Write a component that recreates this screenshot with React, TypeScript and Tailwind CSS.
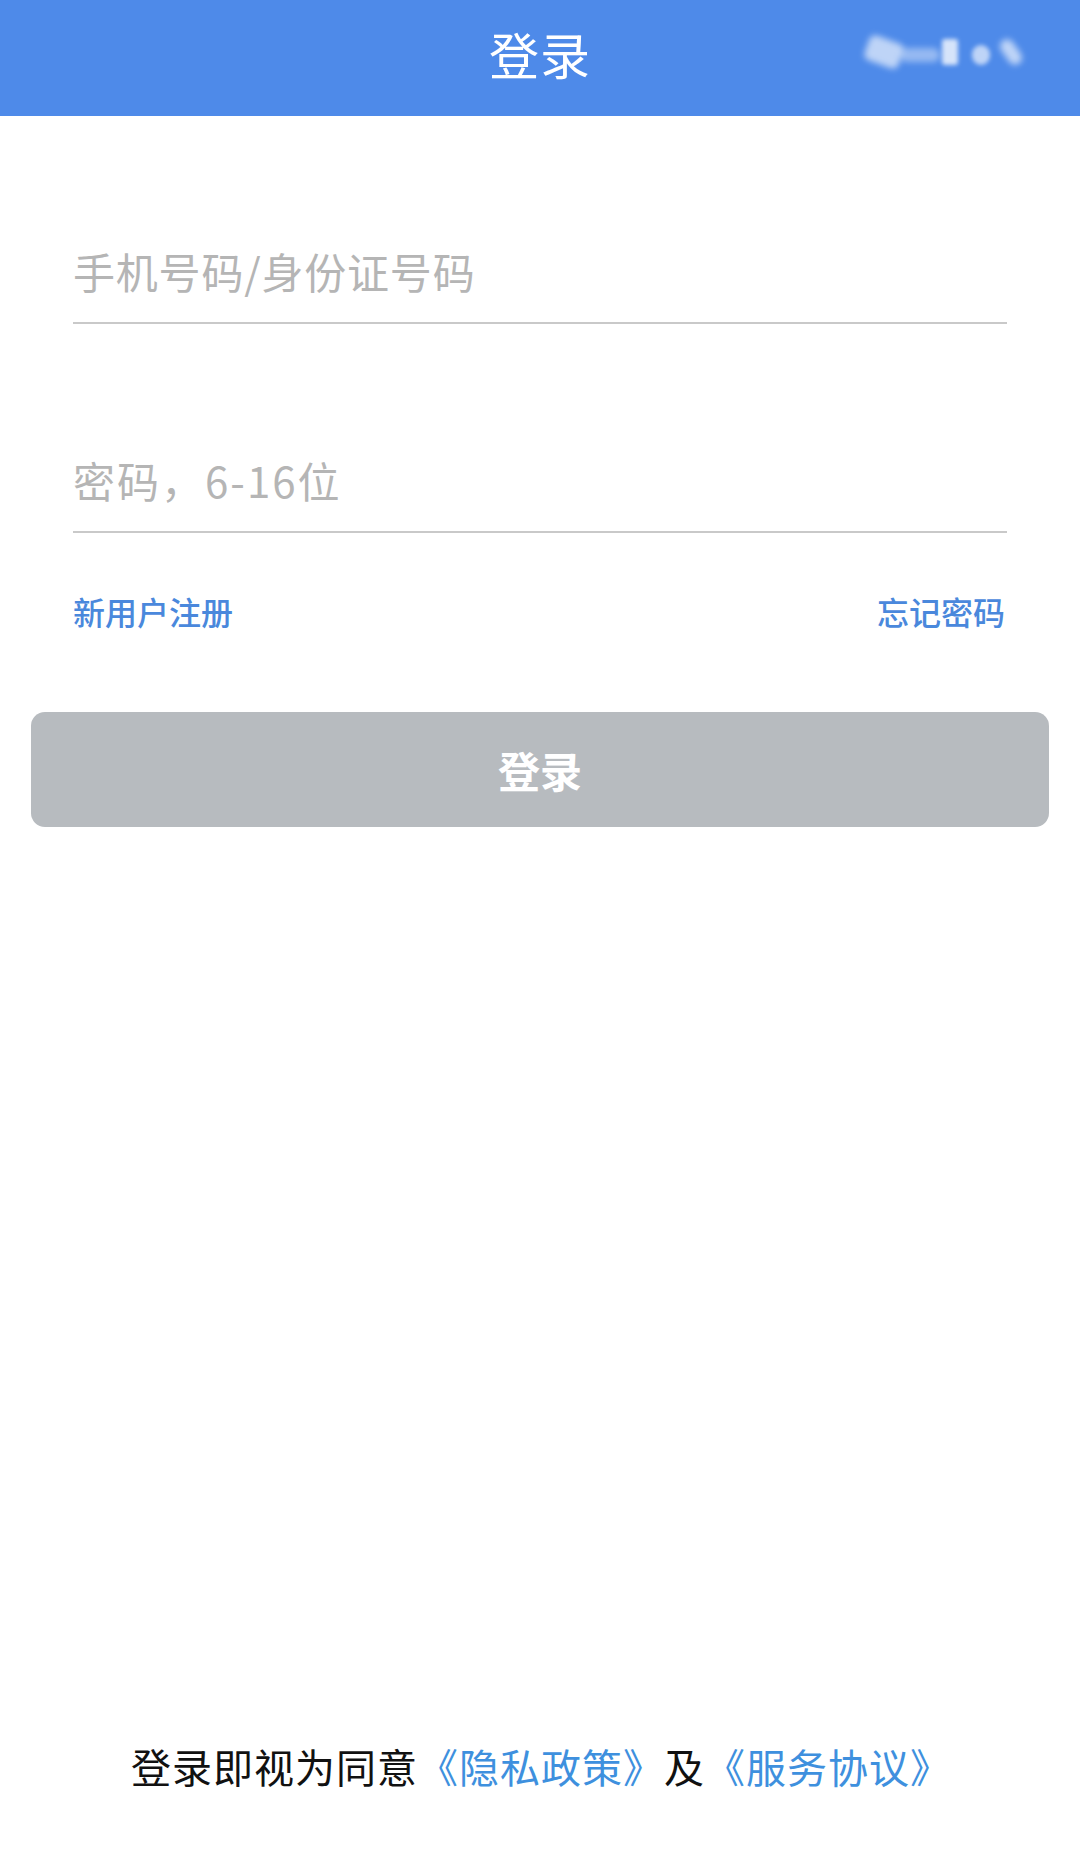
import React from "react";

export default function App() {
  return (
    <div className="min-h-[1870px] w-[1080px] bg-white flex flex-col font-['Noto_Sans_CJK_SC','Noto_Sans',sans-serif]">
      <header className="relative h-[116px] bg-[#4e8ae9] flex items-center justify-center">
        <h1 className="text-[50px] leading-none text-white font-normal tracking-[1px] -mt-[10px]">登录</h1>
        <div className="absolute left-[866px] top-[36px] h-[32px] w-[172px] flex items-center opacity-90">
          <div className="h-[26px] w-[36px] bg-white/70 blur-[3px] rounded-[6px] rotate-[20deg]" />
          <div className="ml-[-2px] h-[14px] w-[40px] bg-white/45 blur-[3px] rounded-full mt-[6px]" />
          <div className="ml-[2px] h-[26px] w-[16px] bg-white/85 blur-[2px] rounded-[3px]" />
          <div className="ml-[14px] h-[20px] w-[18px] bg-white/70 blur-[2px] rounded-full mt-[6px]" />
          <div className="ml-[14px] h-[28px] w-[14px] bg-white/70 blur-[3px] rounded-full rotate-[-35deg]" />
        </div>
      </header>

      <div className="px-[73px]">
        <div className="pt-[125px] pb-[21px] border-b-2 border-[#c9c9c9]">
          <input
            type="text"
            placeholder="手机号码/身份证号码"
            className="block w-full h-[60px] text-[42px] leading-[60px] tracking-[0.8px] text-[#333] placeholder:text-[#b5b5b5] outline-none bg-transparent"
          />
        </div>
        <div className="pt-[126px] pb-[21px] border-b-2 border-[#c9c9c9]">
          <input
            type="text"
            placeholder="密码，6-16位"
            className="block w-full h-[60px] text-[42px] leading-[60px] tracking-[2px] text-[#333] placeholder:text-[#b5b5b5] outline-none bg-transparent"
          />
        </div>
        <div className="mt-[56px] flex items-center justify-between h-[44px] pr-[2px]">
          <span className="text-[32px] leading-[44px] font-medium text-[#4a88dc]">新用户注册</span>
          <span className="text-[32px] leading-[44px] font-medium text-[#4a88dc]">忘记密码</span>
        </div>
      </div>

      <div className="px-[31px] mt-[79px]">
        <button className="w-full h-[115px] rounded-[14px] bg-[#b7bbbf] flex items-center justify-center">
          <span className="text-[42px] leading-none font-bold text-white">登录</span>
        </button>
      </div>

      <div className="mt-auto pb-[76px] flex justify-center">
        <p className="text-[40px] leading-[56px] tracking-[1px] text-[#111] ml-[2px]">
          登录即视为同意<span className="text-[#3e90de]">《隐私政策》</span>及<span className="text-[#3e90de]">《服务协议》</span>
        </p>
      </div>
    </div>
  );
}
